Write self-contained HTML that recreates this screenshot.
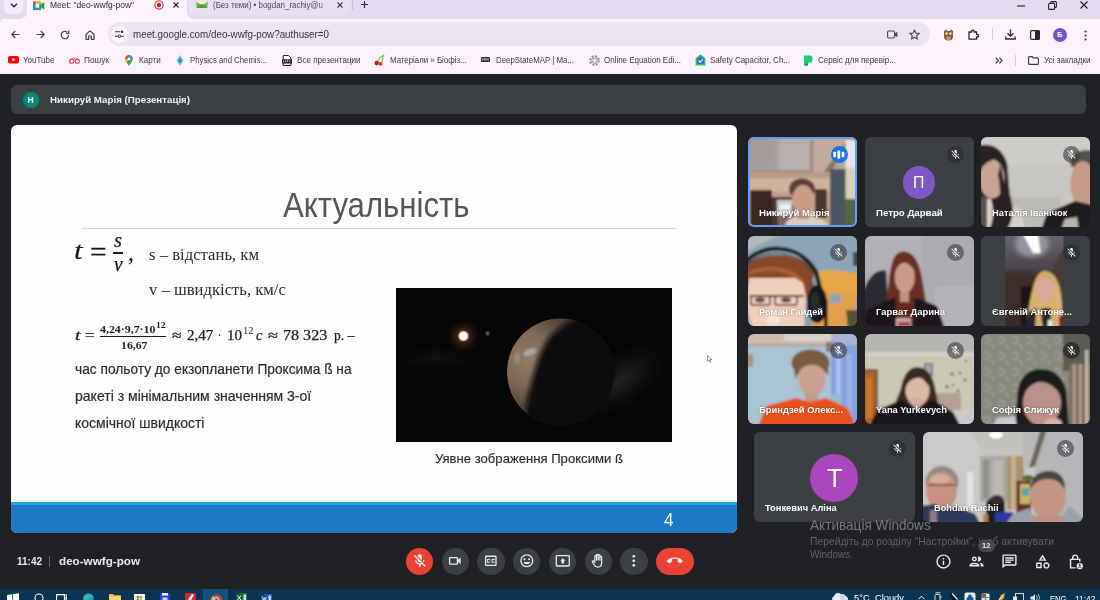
<!DOCTYPE html>
<html><head>
<meta charset="utf-8">
<style>
*{box-sizing:border-box;margin:0;padding:0}
html,body{width:1100px;height:600px;overflow:hidden;background:#202124;font-family:"Liberation Sans",sans-serif;}
.abs{position:absolute}
svg{position:absolute;overflow:visible}
#tabstrip{left:0;top:0;width:1100px;height:18.500px;background:#e5dbf1}
#tab1{left:27px;top:0;width:160px;height:19px;background:#fcf3fd;border-radius:0}
#tab2{left:189px;top:0;width:160px;height:14.5px;background:#e9e0f4;border-radius:0 0 5px 5px}
#chev{left:4px;top:-4px;width:19px;height:18.200px;background:#f3eafb;border-radius:5px}
#toolbar{left:0;top:18.500px;width:1100px;height:29.500px;background:#fcf3fd}
#bookbar{left:0;top:48px;width:1100px;height:26px;background:#fcf3fd}
#urlpill{left:108px;top:22px;width:822px;height:24px;border-radius:12px;background:#ece4f1}
.t{position:absolute;white-space:nowrap;color:#3c3b40;transform-origin:0 50%;line-height:12px;font-size:9.300px}
#meet{left:0;top:74px;width:1100px;height:515px;background:#202124}
#presbar{left:11px;top:85px;width:1075px;height:29px;border-radius:6px;background:#3c4043}
#slide{left:11px;top:125px;width:726px;height:408px;background:#fdfdfe;border-radius:6px;overflow:hidden}
#slide .s{position:absolute;white-space:nowrap;color:#262626;transform-origin:0 50%}
#hr{position:absolute;left:71px;top:103px;width:594px;height:1px;background:#d6d6d8}
.ser{font-family:"Liberation Serif",serif}
#img{position:absolute;left:385px;top:163px;width:276px;height:154px;background:#050505;overflow:hidden}
#band{position:absolute;left:0;top:377px;width:726px;height:31px;background:#1e7ac3}
#band:before{content:"";position:absolute;left:0;top:0;width:100%;height:3px;background:#2aa5de}
.tile{position:absolute;width:108.5px;height:90px;border-radius:6px;background:#3c4043;overflow:hidden}
.tile.w{width:160.6px}
.tile svg.ph{left:0;top:0;width:100%;height:100%}
.name{position:absolute;left:11px;top:70px;font-size:9.6px;line-height:12px;font-weight:bold;color:#fff;white-space:nowrap;transform-origin:0 50%;text-shadow:0 0 2px rgba(0,0,0,.55)}
.mute{position:absolute;left:82px;top:8.4px;width:17px;height:17px;border-radius:50%;background:rgba(60,62,66,.62)}
.tile.w .mute{left:134.5px}
.mute.d{background:#303236}
.mute svg{left:3px;top:3px;width:11px;height:11px}
#taskbar{left:0;top:589px;width:1100px;height:11px;background:#0b3451;overflow:hidden}
.cbtn{position:absolute;top:547.6px;width:27.4px;height:27.4px;border-radius:50%;background:#3c4043}
.cbtn svg{left:5.900px;top:5.900px;width:15.600px;height:15.600px}
.ric{position:absolute;top:553px;width:17px;height:17px}
.wm{position:absolute;white-space:nowrap;transform-origin:0 50%;color:#6f7073}
#slide .f2{font-size:14px;line-height:16px;color:#1c1c1c;-webkit-text-stroke:0.250px #1c1c1c}
</style>
</head>
<body>
<div class="abs" id="tabstrip"></div>
<div class="abs" id="chev"></div>
<svg style="left:9.5px;top:2.5px" width="8" height="5" viewBox="0 0 8 5"><path d="M1 0.8 L4 3.8 L7 0.8" fill="none" stroke="#2d2a33" stroke-width="1.4"></path></svg>
<div class="abs" id="tab1"></div>
<div class="abs" id="tab2"></div>
<div class="abs" style="left:22px;top:13px;width:5px;height:5.500px;background:radial-gradient(circle at 0 0,#e5dbf1 4.600px,#fcf3fd 5.200px)"></div>
<div class="abs" style="left:187px;top:13px;width:5px;height:5.500px;background:radial-gradient(circle at 100% 0,#e5dbf1 4.600px,#fcf3fd 5.200px)"></div>
<!-- meet icon -->
<svg style="left:33px;top:0.5px" width="12" height="9.5" viewBox="0 0 12 9.5">
<rect x="0" y="0.5" width="8.2" height="8.6" rx="1" fill="#1e88e5"></rect>
<rect x="0" y="0.5" width="2.6" height="2.4" fill="#ea4335"></rect>
<rect x="0" y="2.9" width="2.6" height="6.2" fill="#1e88e5"></rect>
<rect x="2.6" y="0.5" width="5.6" height="2.4" fill="#fbbc04"></rect>
<rect x="2.6" y="6.7" width="5.6" height="2.4" fill="#34a853"></rect>
<rect x="2.6" y="2.9" width="3.6" height="3.8" fill="#fcf3fd"></rect>
<path d="M8.2 3.3 L11.3 0.9 L11.3 8.7 L8.2 6.3Z" fill="#1b9e4b"></path>
</svg>
<div class="t" id="tt1" style="left: 50px; top: -1px; font-size: 9.8px; color: rgb(43, 42, 48); transform: scaleX(0.863);">Meet: "deo-wwfg-pow"</div>
<svg style="left:154px;top:0.2px" width="10" height="10" viewBox="0 0 10 10"><circle cx="5" cy="5" r="4.1" fill="none" stroke="#c5221f" stroke-width="1"></circle><circle cx="5" cy="5" r="2.2" fill="#c5221f"></circle></svg>
<svg style="left:173px;top:2px" width="6" height="6" viewBox="0 0 6 6"><path d="M0.5 0.5L5.5 5.5M5.5 0.5L0.5 5.5" stroke="#25232a" stroke-width="1.2"></path></svg>
<!-- tab2 -->
<svg style="left:196px;top:0px" width="12" height="9" viewBox="0 0 12 9"><rect x="0.5" y="0" width="11" height="8" rx="1" fill="#6db33f"></rect><path d="M0.5 2 L6 5.2 L11.5 2 L11.5 0 L0.5 0Z" fill="#e8f0dc"></path><path d="M0.5 8 L6 4 L11.5 8Z" fill="#4f9a2e"></path></svg>
<div class="t" id="tt2" style="left: 213px; top: -1px; font-size: 9.5px; color: rgb(74, 72, 80); transform: scaleX(0.834);">(Без теми) • bogdan_rachiy@u</div>
<div class="abs" style="left:318px;top:0;width:14px;height:12px;background:linear-gradient(90deg,rgba(233,224,244,0),#e9e0f4)"></div>
<svg style="left:337px;top:2px" width="6" height="6" viewBox="0 0 6 6"><path d="M0.5 0.5L5.5 5.5M5.5 0.5L0.5 5.5" stroke="#3a3840" stroke-width="1.1"></path></svg>
<div class="abs" style="left:352px;top:0;width:1px;height:10px;background:#cbb8ee"></div>
<svg style="left:360.5px;top:1px" width="7" height="7" viewBox="0 0 7 7"><path d="M3.5 0V7M0 3.5H7" stroke="#2d2a33" stroke-width="1.2"></path></svg>
<!-- window controls -->
<svg style="left:1017px;top:4.5px" width="8" height="2" viewBox="0 0 8 2"><path d="M0 1H8" stroke="#222" stroke-width="1.1"></path></svg>
<svg style="left:1048px;top:0.5px" width="9" height="9" viewBox="0 0 9 9"><rect x="0.6" y="2.4" width="6" height="6" rx="1" fill="none" stroke="#222" stroke-width="1.1"></rect><path d="M2.6 2.2V1.6A1 1 0 0 1 3.6 0.6H7.4A1 1 0 0 1 8.4 1.6V5.4A1 1 0 0 1 7.4 6.4H6.8" fill="none" stroke="#222" stroke-width="1.1"></path></svg>
<svg style="left:1080px;top:1px" width="8" height="8" viewBox="0 0 8 8"><path d="M0.5 0.5L7.5 7.5M7.5 0.5L0.5 7.5" stroke="#222" stroke-width="1.2"></path></svg>

<div class="abs" id="toolbar"></div>
<div class="abs" id="bookbar"></div>
<div class="abs" style="left:0;top:18px;width:5px;height:5px;background:radial-gradient(circle at 100% 100%,#fcf3fd 4.600px,#e5dbf1 5.200px)"></div>
<div class="abs" id="urlpill"></div>
<!-- nav icons -->
<svg style="left:11px;top:30px" width="9" height="9" viewBox="0 0 9 9"><path d="M8.5 4.5H1M4.3 1L0.8 4.5L4.3 8" fill="none" stroke="#47464c" stroke-width="1.2"></path></svg>
<svg style="left:35.5px;top:30px" width="9" height="9" viewBox="0 0 9 9"><path d="M0.5 4.5H8M4.7 1L8.2 4.5L4.7 8" fill="none" stroke="#47464c" stroke-width="1.2"></path></svg>
<svg style="left:60px;top:29.5px" width="10" height="10" viewBox="0 0 10 10"><path d="M8.6 5A3.7 3.7 0 1 1 7.4 2.3" fill="none" stroke="#47464c" stroke-width="1.2"></path><path d="M8.8 0.6V3.4H6" fill="none" stroke="#47464c" stroke-width="1.2"></path></svg>
<svg style="left:85px;top:29.5px" width="10" height="10" viewBox="0 0 10 10"><path d="M1 4.3L5 0.9L9 4.3V9.3H6.3V6H3.7V9.3H1Z" fill="none" stroke="#47464c" stroke-width="1.2" stroke-linejoin="round"></path></svg>
<div class="abs" style="left:110.5px;top:25.5px;width:17px;height:17px;border-radius:50%;background:#fbf7fd"></div>
<svg style="left:114.5px;top:30px" width="9" height="8" viewBox="0 0 9 8"><path d="M0 1.8H5M0 6.2H3.6M6.2 6.2H9" stroke="#2c2b31" stroke-width="1.1"></path><circle cx="7" cy="1.8" r="1.3" fill="#2c2b31"></circle><circle cx="4.6" cy="6.2" r="1.3" fill="none" stroke="#2c2b31" stroke-width="1"></circle></svg>
<div class="t" id="url" style="left: 133px; top: 28.5px; font-size: 10.4px; color: rgb(54, 53, 58); transform: scaleX(0.944);">meet.google.com/deo-wwfg-pow?authuser=0</div>
<!-- right toolbar icons -->
<svg style="left:887px;top:30px" width="11" height="9" viewBox="0 0 11 9"><rect x="0.6" y="1" width="7" height="7" rx="1.2" fill="none" stroke="#47464c" stroke-width="1.1"></rect><path d="M7.8 3.6L10.4 1.8V7.2L7.8 5.4Z" fill="#47464c"></path></svg>
<svg style="left:909px;top:29px" width="11" height="11" viewBox="0 0 11 11"><path d="M5.5 0.9L6.9 4.1L10.3 4.4L7.7 6.6L8.5 10L5.5 8.2L2.5 10L3.3 6.6L0.7 4.4L4.1 4.1Z" fill="none" stroke="#47464c" stroke-width="1.1" stroke-linejoin="round"></path></svg>
<svg style="left:943px;top:29px" width="11" height="12" viewBox="0 0 11 12"><path d="M1 2L2.8 0.6L4 2H7L8.2 0.6L10 2V8C10 10.5 8 11.5 5.5 11.5S1 10.5 1 8Z" fill="#8a5a3a"></path><circle cx="3.6" cy="4.6" r="1.3" fill="#f3d9a0"></circle><circle cx="7.4" cy="4.6" r="1.3" fill="#f3d9a0"></circle><path d="M3.5 7.5H7.5V11H3.5Z" fill="#c49a6c"></path></svg>
<svg style="left:968px;top:29px" width="11" height="11" viewBox="0 0 11 11"><path d="M1 3H3.6V2.4A1.3 1.3 0 0 1 6.2 2.4V3H8.6V5.4H9.2A1.3 1.3 0 0 1 9.2 8H8.6V10.2H1Z" fill="none" stroke="#26252b" stroke-width="1.3" stroke-linejoin="round"></path></svg>
<div class="abs" style="left:992px;top:28px;width:1px;height:12px;background:#d6cce6"></div>
<svg style="left:1005px;top:29px" width="11" height="11" viewBox="0 0 11 11"><path d="M5.5 0.5V7M2.5 4.2L5.5 7.2L8.5 4.2" fill="none" stroke="#2d2c32" stroke-width="1.3"></path><path d="M0.8 7.5V10H10.2V7.5" fill="none" stroke="#2d2c32" stroke-width="1.3"></path></svg>
<svg style="left:1030px;top:29.5px" width="10" height="10" viewBox="0 0 10 10"><rect x="0.6" y="0.6" width="8.8" height="8.8" rx="1" fill="none" stroke="#2d2c32" stroke-width="1.2"></rect><rect x="5" y="0.6" width="4.4" height="8.8" fill="#2d2c32"></rect></svg>
<div class="abs" style="left:1053px;top:27.5px;width:14px;height:14px;border-radius:50%;background:#7b4fc9"></div>
<div class="t" style="left:1057.3px;top:28.8px;font-size:7px;color:#fff;font-weight:bold">Б</div>
<svg style="left:1083.5px;top:29.5px" width="3" height="11" viewBox="0 0 3 11"><circle cx="1.5" cy="1.5" r="1.1" fill="#38373d"></circle><circle cx="1.5" cy="5.5" r="1.1" fill="#38373d"></circle><circle cx="1.5" cy="9.5" r="1.1" fill="#38373d"></circle></svg>

<!-- bookmarks -->
<svg style="left:8.3px;top:56.2px" width="11" height="8" viewBox="0 0 11 8"><rect width="11" height="7.6" rx="2" fill="#f00"></rect><path d="M4.3 2L7.4 3.8L4.3 5.6Z" fill="#fff"></path></svg>
<div class="t" style="left: 23.3px; top: 53.5px; transform: scaleX(0.862);">YouTube</div>
<svg style="left:68.7px;top:56.5px" width="11" height="7" viewBox="0 0 11 7"><circle cx="2.7" cy="4.2" r="2.1" fill="none" stroke="#e0455a" stroke-width="1.1"></circle><circle cx="8.3" cy="4.2" r="2.1" fill="none" stroke="#e0455a" stroke-width="1.1"></circle><path d="M2.7 2.1L4.5 0.6L6.5 2.1L8.3 2.1" fill="none" stroke="#e0455a" stroke-width="1"></path></svg>
<div class="t" style="left: 84.3px; top: 53.5px; transform: scaleX(0.892);">Пошук</div>
<svg style="left:124.5px;top:54.5px" width="8" height="11" viewBox="0 0 8 11"><path d="M4 0.3A3.7 3.7 0 0 0 0.3 4C0.3 6.5 4 10.7 4 10.7S7.7 6.5 7.7 4A3.7 3.7 0 0 0 4 0.3Z" fill="#34a853"></path><path d="M4 0.3A3.7 3.7 0 0 0 0.3 4L4 4Z" fill="#ea4335"></path><path d="M4 0.3A3.7 3.7 0 0 1 7.7 4L4 4Z" fill="#4285f4"></path><path d="M0.3 4C0.3 5 1 6.3 1.8 7.5L4 4Z" fill="#fbbc04"></path><circle cx="4" cy="4" r="1.4" fill="#fff"></circle></svg>
<div class="t" style="left: 138.5px; top: 53.5px; transform: scaleX(0.867);">Карти</div>
<svg style="left:175.5px;top:54.5px" width="8" height="11" viewBox="0 0 8 11"><path d="M4 0L7.6 5.5L4 11L0.4 5.5Z" fill="#7ec8e0"></path><path d="M4 2.5L6 5.5L4 8.5L2 5.5Z" fill="#2a8fb5"></path></svg>
<div class="t" style="left: 190px; top: 53.5px; transform: scaleX(0.837);">Physics and Chemis...</div>
<svg style="left:281.5px;top:54.5px" width="10" height="11" viewBox="0 0 10 11"><path d="M1.2 0.5H6.5L9 3V10.5H1.2Z" fill="#fff" stroke="#222" stroke-width="1"></path><rect x="0" y="4.2" width="10" height="4.3" rx="0.6" fill="#1d1d1d"></rect><path d="M1.5 7.4V5.2M3.6 7.4V5.2M5.2 7.4V5.2H6.4M7.8 7.4V5.2" stroke="#fff" stroke-width="0.7"></path></svg>
<div class="t" style="left: 296.7px; top: 53.5px; transform: scaleX(0.867);">Все презентации</div>
<svg style="left:374px;top:54.5px" width="11" height="11" viewBox="0 0 11 11"><path d="M3 7.5C4 4 6 2 9.5 0.5C8.5 3 8 5 8.2 7.5" fill="none" stroke="#8bb84a" stroke-width="1.2"></path><path d="M9.5 0.5C7 1 5.5 2.5 5 4.5" fill="#9acb52"></path><circle cx="2.8" cy="8" r="2.3" fill="#c4151c"></circle><circle cx="6.6" cy="8.8" r="1.9" fill="#e02a2f"></circle></svg>
<div class="t" style="left: 389.5px; top: 53.5px; transform: scaleX(0.845);">Матеріали » Біофіз...</div>
<svg style="left:481px;top:57px" width="9" height="5" viewBox="0 0 9 5"><rect width="9" height="5" rx="0.8" fill="#2b2b2b"></rect><path d="M1.2 3.8V1.3L2.4 2.8L3.6 1.3V3.8M4.8 3.8V1.3L6 2.8L7.2 1.3V3.8" fill="none" stroke="#e8e8e8" stroke-width="0.6"></path></svg>
<div class="t" style="left: 496px; top: 53.5px; transform: scaleX(0.846);">DeepStateMAP | Ma...</div>
<svg style="left:588.5px;top:54.5px" width="11" height="11" viewBox="0 0 11 11"><circle cx="5.5" cy="5.5" r="4.2" fill="none" stroke="#8d8d8d" stroke-width="2.2" stroke-dasharray="1.9 1.4"></circle><circle cx="5.5" cy="5.5" r="3.4" fill="#b9b9b9"></circle><circle cx="5.5" cy="5.5" r="1.7" fill="#f1edf3"></circle></svg>
<div class="t" style="left: 604px; top: 53.5px; transform: scaleX(0.856);">Online Equation Edi...</div>
<svg style="left:694.5px;top:54px" width="11" height="12" viewBox="0 0 11 12"><path d="M5.5 0.3L10.4 4.3V11.5H0.6V4.3Z" fill="#3bbf4a"></path><path d="M5.5 2.2L8.8 5V10H2.2V5Z" fill="#2a6fe0"></path><path d="M3.6 6.6L5 8.4L7.6 5.4" fill="none" stroke="#fff" stroke-width="1.1"></path></svg>
<div class="t" style="left: 710px; top: 53.5px; transform: scaleX(0.86);">Safety Capacitor, Ch...</div>
<svg style="left:803px;top:54.5px" width="10" height="11" viewBox="0 0 10 11"><path d="M1 0.5H7A2.5 2.5 0 0 1 9.5 3V5A2.5 2.5 0 0 1 7 7.5H5V10.5H1Z" fill="#0fd17a"></path><path d="M5 7.5V10.5H1Z" fill="#08a35c"></path></svg>
<div class="t" style="left: 818px; top: 53.5px; transform: scaleX(0.864);">Сервіс для перевір...</div>
<svg style="left:995px;top:56.5px" width="8" height="7" viewBox="0 0 8 7"><path d="M0.7 0.7L3.4 3.5L0.7 6.3M4.4 0.7L7.1 3.5L4.4 6.3" fill="none" stroke="#3b3a40" stroke-width="1.1"></path></svg>
<div class="abs" style="left:1015px;top:54.5px;width:1px;height:11px;background:#d3c9e2"></div>
<svg style="left:1027.5px;top:55.5px" width="11" height="9" viewBox="0 0 11 9"><path d="M0.6 1.6A1 1 0 0 1 1.6 0.6H4.2L5.4 1.9H9.4A1 1 0 0 1 10.4 2.9V7.4A1 1 0 0 1 9.4 8.4H1.6A1 1 0 0 1 0.6 7.4Z" fill="none" stroke="#36353b" stroke-width="1.1"></path></svg>
<div class="t" style="left: 1044px; top: 53.5px; transform: scaleX(0.87);">Усі закладки</div>

<div class="abs" id="meet"></div>
<div class="abs" id="presbar"></div>
<div class="abs" style="left:22.7px;top:91.7px;width:16.6px;height:16.6px;border-radius:50%;background:#00897b"></div>
<div class="t" style="left:27.6px;top:94.2px;font-size:8.3px;color:#fff;font-weight:bold">Н</div>
<div class="t" id="pres" style="left: 50px; top: 93.6px; font-size: 9.7px; color: rgb(241, 243, 244); font-weight: bold; transform: scaleX(1.006);">Никируй Марія (Презентація)</div>
<div class="abs" id="slide">
<div class="s" id="title" style="left: 272px; top: 59.5px; font-size: 34.5px; line-height: 40px; color: rgb(86, 86, 86); transform: scaleX(0.903);">Актуальність</div>
<div id="hr"></div>
<!-- formula 1 -->
<div class="s ser" style="left: 63.3px; top: 110.5px; font-size: 26px; line-height: 30px; font-style: italic; color: rgb(22, 22, 22); -webkit-text-stroke: 0.15px rgb(22, 22, 22); transform: scaleX(1.189);">t</div>
<div class="s ser" style="left: 79px; top: 112px; font-size: 27px; line-height: 30px; color: rgb(22, 22, 22); -webkit-text-stroke: 0.3px rgb(22, 22, 22); transform: scaleX(1.083);">=</div>
<div class="s ser" style="left: 103px; top: 103.5px; font-size: 20.5px; line-height: 22px; font-style: italic; color: rgb(22, 22, 22); -webkit-text-stroke: 0.25px rgb(22, 22, 22); transform: scaleX(1.002);">s</div>
<div style="position:absolute;left:102px;top:127.4px;width:10.2px;height:1.5px;background:#1c1c1c"></div>
<div class="s ser" style="left: 102.6px; top: 128px; font-size: 20.5px; line-height: 22px; font-style: italic; color: rgb(22, 22, 22); -webkit-text-stroke: 0.25px rgb(22, 22, 22); transform: scaleX(0.944);">v</div>
<div class="s ser" style="left: 116.5px; top: 112.5px; font-size: 26px; line-height: 30px; color: rgb(22, 22, 22); transform: scaleX(0.923);">,</div>
<div class="s ser" id="l1" style="left: 137.7px; top: 119.5px; font-size: 16.8px; line-height: 20px; color: rgb(42, 42, 42); transform: scaleX(0.994);">s – відстань, км</div>
<div class="s ser" id="l2" style="left: 137.7px; top: 155px; font-size: 16.8px; line-height: 20px; color: rgb(42, 42, 42); transform: scaleX(0.991);">v – швидкість, км/с</div>
<!-- formula 2 -->
<div class="s ser f2" style="left: 63.5px; top: 203px; font-style: italic; transform: scaleX(1.439);">t</div>
<div class="s ser f2" style="left: 73.7px; top: 203px; transform: scaleX(1.214);">=</div>
<div class="s ser" style="left: 89px; top: 198.8px; font-size: 9.6px; line-height: 12px; font-weight: bold; color: rgb(28, 28, 28); transform: scaleX(1.239);">4,24·9,7·10</div>
<div class="s ser" style="left: 144.6px; top: 195.6px; font-size: 7.4px; line-height: 10px; font-weight: bold; color: rgb(28, 28, 28); transform: scaleX(1.299);">12</div>
<div style="position:absolute;left:88.5px;top:211.3px;width:66px;height:1.1px;background:#1c1c1c"></div>
<div class="s ser" style="left: 109.5px; top: 213.6px; font-size: 10.8px; line-height: 12px; font-weight: bold; color: rgb(28, 28, 28); transform: scaleX(1.091);">16,67</div>
<div class="s ser f2" style="left: 161px; top: 203px; transform: scaleX(1.249);">≈</div>
<div class="s ser f2" style="left: 176px; top: 203px; transform: scaleX(1.073);">2,47</div>
<div class="s ser f2" style="left: 207.4px; top: 203px; transform: scaleX(0.685);">·</div>
<div class="s ser f2" style="left: 215.7px; top: 203px; transform: scaleX(1.079);">10</div>
<div class="s ser" style="left: 231.8px; top: 199.6px; font-size: 9.6px; line-height: 12px; color: rgb(28, 28, 28); transform: scaleX(1.105);">12</div>
<div class="s ser f2" style="left: 244.5px; top: 203px; font-style: italic; transform: scaleX(1.045);">c</div>
<div class="s ser f2" style="left: 257px; top: 203px; transform: scaleX(1.301);">≈</div>
<div class="s ser f2" style="left: 272.4px; top: 203px; transform: scaleX(1.148);">78 323</div>
<div class="s ser f2" style="left: 322.5px; top: 203px; transform: scaleX(0.962);">р.</div>
<div class="s ser f2" style="left: 336.4px; top: 203px; transform: scaleX(1);">–</div>
<!-- paragraph -->
<div class="s" id="p1" style="-webkit-text-stroke: 0.2px rgb(43, 43, 43); left: 63.5px; top: 235px; font-size: 15px; line-height: 18px; color: rgb(43, 43, 43); transform: scaleX(0.915);">час польоту до екзопланети Проксима ß на</div>
<div class="s" id="p2" style="-webkit-text-stroke: 0.2px rgb(43, 43, 43); left: 63.5px; top: 262px; font-size: 15px; line-height: 18px; color: rgb(43, 43, 43); transform: scaleX(0.935);">ракеті з мінімальним значенням 3-ої</div>
<div class="s" id="p3" style="-webkit-text-stroke: 0.2px rgb(43, 43, 43); left: 63.5px; top: 289px; font-size: 15px; line-height: 18px; color: rgb(43, 43, 43); transform: scaleX(0.932);">космічної швидкості</div>
<div id="img">
<svg class="ph" style="left:0;top:0" width="276" height="154" viewBox="0 0 276 154">
<defs>
<radialGradient id="star"><stop offset="0" stop-color="#fff"></stop><stop offset="0.22" stop-color="#fbe9d0"></stop><stop offset="0.360" stop-color="#6a3820" stop-opacity=".550"></stop><stop offset="1" stop-color="#2a140a" stop-opacity="0"></stop></radialGradient>
<radialGradient id="mw" cx="0.5" cy="0.5" r="0.5"><stop offset="0" stop-color="#26262a" stop-opacity=".9"></stop><stop offset="1" stop-color="#101012" stop-opacity="0"></stop></radialGradient>
<radialGradient id="pl" cx="0.200" cy="0.380" r="0.800"><stop offset="0" stop-color="#937c66"></stop><stop offset="0.300" stop-color="#7e6956"></stop><stop offset="0.550" stop-color="#584638"></stop><stop offset="1" stop-color="#241c17"></stop></radialGradient>
<filter id="b1"><feGaussianBlur stdDeviation="1.2"></feGaussianBlur></filter>
<filter id="b4"><feGaussianBlur stdDeviation="5"></feGaussianBlur></filter>
<filter id="b3" x="-20%" y="-20%" width="140%" height="140%"><feGaussianBlur stdDeviation="2.600"></feGaussianBlur></filter>
<clipPath id="plc"><circle cx="164.5" cy="84" r="53.7"></circle></clipPath>
</defs>
<rect width="276" height="154" fill="#070606"></rect>
<ellipse cx="225" cy="92" rx="60" ry="30" fill="url(#mw)" transform="rotate(-35 225 92)"></ellipse>
<ellipse cx="40" cy="70" rx="45" ry="14" fill="url(#mw)" opacity=".5"></ellipse>
<circle cx="67.4" cy="48" r="17" fill="url(#star)"></circle>
<circle cx="67.4" cy="48" r="3.6" fill="#fff" filter="url(#b1)"></circle>
<circle cx="91.6" cy="45.3" r="1.6" fill="#9a9a9a" filter="url(#b1)"></circle>
<circle cx="164.5" cy="84" r="53.7" fill="#0b0a0a"></circle>
<g clip-path="url(#plc)">
<circle cx="164.5" cy="84" r="53.7" fill="url(#pl)"></circle>
<path d="M186 26C168 36 156 44 150 54C142 68 137 88 132 108C130 120 129 130 129 142L235 142L235 15Z" fill="#090808" filter="url(#b3)"></path>
<ellipse cx="134" cy="64" rx="7" ry="3.500" fill="#b9c8d4" opacity=".600" filter="url(#b1)" transform="rotate(-20 134 64)"></ellipse>
<ellipse cx="121" cy="70" rx="3" ry="6" fill="#c0b0a0" opacity=".350" filter="url(#b1)"></ellipse>
</g>
</svg>
</div>
<div class="s" id="cap" style="-webkit-text-stroke: 0.15px rgb(43, 43, 43); left: 424px; top: 325.5px; font-size: 13.2px; line-height: 16px; color: rgb(43, 43, 43); transform: scaleX(0.994);">Уявне зображення Проксими ß</div>
<div id="band"><div class="s" style="left: 653px; top: 8px; font-size: 18.5px; line-height: 20px; color: rgb(255, 255, 255); transform: scaleX(0.923);">4</div></div>
</div>
<!-- mouse cursor -->
<svg style="left:707px;top:354.5px" width="6" height="8" viewBox="0 0 6 8"><path d="M0.5 0.5V6.2L2 4.9L3 7.2L3.9 6.8L2.9 4.6H4.8Z" fill="#fff" stroke="#555" stroke-width="0.6"></path></svg>
<svg width="0" height="0" style="left:0;top:0"><defs>
<filter id="sb" x="-5%" y="-5%" width="110%" height="110%"><feGaussianBlur stdDeviation="0.9"></feGaussianBlur></filter>
<filter id="sb2" x="-20%" y="-20%" width="140%" height="140%"><feGaussianBlur stdDeviation="2.2"></feGaussianBlur></filter>
</defs></svg>

<!-- T1 Никируй Марія -->
<div class="tile" style="left:748.2px;top:137.4px">
<svg class="ph" viewBox="0 0 108.5 90" preserveAspectRatio="none"><g filter="url(#sb)">
<rect x="-3" y="-3" width="115" height="96" fill="#c8a893"></rect>
<path d="M-3 -3H112V20L80 38H-3Z" fill="#b3a6a1"></path>
<path d="M3 3H62V34H3Z" fill="#b9b1ae"></path>
<path d="M-3 -3H30V34H-3Z" fill="#9d9592" opacity=".7" filter="url(#sb2)"></path>
<path d="M62 3H65V35H3V33H62Z" fill="#9b8b86"></path>
<path d="M66 3H100L78 36H66Z" fill="#c2aa9c"></path>
<path d="M100 2L104 4L80 38L75 36Z" fill="#8c7465"></path>
<rect x="-3" y="35" width="86" height="6" fill="#b99b89"></rect>
<rect x="-3" y="41" width="86" height="14" fill="#cfb29c"></rect>
<rect x="-3" y="55" width="86" height="38" fill="#c29f8a"></rect>
<rect x="2" y="53" width="22" height="38" fill="#3a2521"></rect>
<rect x="24" y="60" width="22" height="31" fill="#4d342c"></rect>
<rect x="29" y="63" width="15" height="15" fill="#c5cdd6"></rect>
<rect x="31.5" y="67.5" width="11" height="5" fill="#f2f2f2"></rect>
<rect x="30" y="78" width="14" height="12" fill="#7d6a5c"></rect>
<rect x="67" y="52" width="12" height="29" fill="#4b3631"></rect>
<rect x="82" y="32" width="16" height="60" fill="#4b5560"></rect>
<rect x="97.5" y="3" width="12" height="28" fill="#e6e6e6"></rect>
<rect x="97.5" y="31" width="12" height="36" fill="#d8cfb8"></rect>
<rect x="97" y="62" width="12" height="30" fill="#56644b"></rect>
<ellipse cx="54" cy="52" rx="13" ry="10.5" fill="#5a4137"></ellipse>
<ellipse cx="55" cy="63" rx="11" ry="15" fill="#c99c88"></ellipse>
<path d="M36 92C38 80 46 79 55 80C66 79 78 80 82 92Z" fill="#dacfbb"></path>
<rect x="49" y="74" width="12" height="8" fill="#bd917e"></rect>
</g></svg>
<div class="abs" style="left:0;top:0;width:100%;height:100%;border:2.700px solid #669df6;border-radius:6px"></div>
<div class="abs" style="left:82.4px;top:8.2px;width:17.4px;height:17.4px;border-radius:50%;background:#1a73e8"></div>
<svg style="left:85.300px;top:12.400px" width="11.600" height="9" viewBox="0 0 11.6 9"><rect x="0.300" y="1.700" width="2.700" height="5.600" rx="0.800" fill="#fff"></rect><rect x="4.450" y="0.200" width="2.700" height="8.600" rx="0.800" fill="#fff"></rect><rect x="8.600" y="1.700" width="2.700" height="5.600" rx="0.800" fill="#fff"></rect></svg>
<div class="name" style="transform: scaleX(0.997);">Никируй Марія</div>
</div>

<!-- T2 Петро Дарвай -->
<div class="tile" style="left:865px;top:137.4px">
<div class="abs" style="left:37.5px;top:28.6px;width:32.6px;height:32.6px;border-radius:50%;background:#7e57c2"></div>
<div class="t" style="left: 48px; top: 35.5px; font-size: 17px; line-height: 19px; color: rgb(255, 255, 255); transform: scaleX(0.933);">П</div>
<div class="mute d"><svg viewBox="0 0 24 24"><path fill="#fff" d="M19 11h-1.700c0 .740-.160 1.430-.430 2.050l1.230 1.230c.560-.980.900-2.090.900-3.280zm-4.020.170c0-.060.020-.110.020-.170V5c0-1.660-1.340-3-3-3S9 3.340 9 5v.180l5.980 5.990zM4.270 3L3 4.270l6.010 6.010V11c0 1.650 1.330 3 2.990 3 .220 0 .440-.030.650-.080l1.660 1.660c-.710.330-1.500.520-2.310.520-2.760 0-5.300-2.100-5.300-5.100H5c0 3.410 2.720 6.230 6 6.720V21h2v-3.280c.910-.130 1.770-.450 2.540-.900L19.730 21 21 19.730 4.270 3z"></path></svg></div>
<div class="name" style="text-shadow: none; transform: scaleX(1.007);">Петро Дарвай</div>
</div>

<!-- T3 Наталія Іванічок -->
<div class="tile" style="left:981.2px;top:137.4px">
<svg class="ph" viewBox="0 0 108.5 90" preserveAspectRatio="none"><g filter="url(#sb)">
<rect x="-3" y="-3" width="115" height="96" fill="#c7c6c2"></rect>
<rect x="-3" y="-3" width="115" height="30" fill="#cdccc8"></rect>
<rect x="30" y="60" width="50" height="33" fill="#bdbbb6"></rect>
<path d="M-3 65L10 62L40 72L44 93H-3Z" fill="#d6d2ca"></path>
<path d="M-3 10C8 6 22 12 26 26C28 40 27 52 31 66C33 76 30 86 26 93H8C14 80 12 70 10 62L-3 60Z" fill="#2b2321"></path>
<ellipse cx="11" cy="42" rx="12.5" ry="19.5" fill="#c9a495"></ellipse>
<path d="M-3 9C8 5 20 10 24 22C14 20 4 24 -3 36Z" fill="#2b2321"></path>
<path d="M19 28C24 40 22 56 28 70L22 80C18 66 20 50 17 38Z" fill="#2b2321"></path>
<rect x="-3" y="60" width="9" height="33" fill="#5a5048"></rect>
<path d="M89 22C94 13 104 12 112 14V30H90Z" fill="#56504c"></path>
<ellipse cx="102" cy="47" rx="12.5" ry="23" fill="#c59b8b"></ellipse>
<path d="M60 93L66 76L94 64L112 68V93Z" fill="#1f1d1d"></path>
<path d="M80 93L84 82L96 80L98 93Z" fill="#b9b5a8"></path>
</g></svg>
<div class="mute"><svg viewBox="0 0 24 24"><path fill="#fff" d="M19 11h-1.700c0 .740-.160 1.430-.430 2.050l1.230 1.230c.560-.980.900-2.090.900-3.280zm-4.020.170c0-.060.020-.110.020-.170V5c0-1.660-1.340-3-3-3S9 3.340 9 5v.180l5.980 5.990zM4.270 3L3 4.270l6.010 6.010V11c0 1.650 1.330 3 2.990 3 .220 0 .440-.030.650-.080l1.660 1.660c-.710.330-1.500.520-2.310.520-2.760 0-5.300-2.100-5.300-5.100H5c0 3.410 2.720 6.230 6 6.720V21h2v-3.280c.910-.130 1.770-.450 2.540-.900L19.730 21 21 19.730 4.270 3z"></path></svg></div>
<div class="name" style="transform: scaleX(0.97);">Наталія Іванічок</div>
</div>

<!-- T4 Роман Гайдей -->
<div class="tile" style="left:748.2px;top:235.7px">
<svg class="ph" viewBox="0 0 108.5 90" preserveAspectRatio="none"><g filter="url(#sb)">
<rect x="-3" y="-3" width="115" height="96" fill="#8ba4b8"></rect>
<path d="M-3 -3H36L-3 16Z" fill="#b2b9b8"></path>
<rect x="105" y="16" width="6" height="14" fill="#4a4a4a"></rect>
<path d="M70 36C80 32 100 36 112 38V58H72Z" fill="#e9a646"></path>
<path d="M78 56H108V93H62L70 72Z" fill="#e3a04c"></path>
<rect x="82" y="58" width="11" height="9" fill="#8ba4b8"></rect>
<path d="M98 74H112V93H100Z" fill="#5a5038"></path>
<ellipse cx="30" cy="38" rx="36" ry="19" fill="#8c4b29"></ellipse>
<path d="M-3 30C20 14 60 20 66 50L64 66L52 60L50 44L-3 44Z" fill="#87472a"></path>
<path d="M1 42H54L58 60L56 93H4L-1 70Z" fill="#f0ceBc"></path>
<path d="M0 40C16 32 40 34 56 48L54 42C40 28 14 28 0 36Z" fill="#a55f36"></path>
<rect x="2" y="59" width="54" height="2" fill="#3a2a2a"></rect>
<rect x="3" y="60" width="19" height="9" rx="2" fill="none" stroke="#3a2a2a" stroke-width="1.4"></rect>
<rect x="27" y="60" width="22" height="9" rx="2" fill="none" stroke="#3a2a2a" stroke-width="1.4"></rect>
<ellipse cx="12" cy="64" rx="5" ry="2.4" fill="#5a4a40"></ellipse>
<ellipse cx="38" cy="64" rx="5" ry="2.4" fill="#5a4a40"></ellipse>
<path d="M-3 27C10 9 50 4 68 36L72 52" fill="none" stroke="#15171a" stroke-width="4.2" stroke-linecap="round"></path>
<path d="M-3 31C10 14 48 9 64 38" fill="none" stroke="#3a3f44" stroke-width="1.2"></path>
<ellipse cx="69" cy="68" rx="10" ry="19" fill="#141416"></ellipse>
<ellipse cx="67" cy="68" rx="5" ry="13" fill="#2a2a2e"></ellipse>
<rect x="76" y="64" width="3.500" height="28" fill="#18181a"></rect>
<ellipse cx="25" cy="84" rx="7" ry="5" fill="#f7e2d6"></ellipse>
</g></svg>
<div class="mute"><svg viewBox="0 0 24 24"><path fill="#fff" d="M19 11h-1.700c0 .740-.160 1.430-.430 2.050l1.230 1.230c.560-.980.900-2.090.900-3.280zm-4.020.170c0-.060.020-.110.020-.170V5c0-1.660-1.340-3-3-3S9 3.340 9 5v.180l5.980 5.990zM4.270 3L3 4.270l6.010 6.010V11c0 1.650 1.330 3 2.990 3 .220 0 .440-.030.650-.080l1.660 1.660c-.710.330-1.500.520-2.310.520-2.760 0-5.300-2.100-5.300-5.100H5c0 3.410 2.720 6.230 6 6.720V21h2v-3.280c.910-.130 1.770-.450 2.540-.900L19.730 21 21 19.730 4.270 3z"></path></svg></div>
<div class="name" style="transform: scaleX(0.962);">Роман Гайдей</div>
</div>

<!-- T5 Гарват Дарина -->
<div class="tile" style="left:865px;top:235.7px">
<svg class="ph" viewBox="0 0 108.5 90" preserveAspectRatio="none"><g filter="url(#sb)">
<rect x="-3" y="-3" width="115" height="96" fill="#adabb0"></rect>
<rect x="-3" y="-3" width="60" height="40" fill="#b3b1b6"></rect>
<rect x="70" y="50" width="42" height="43" fill="#b6b4b9"></rect>
<path d="M-3 58C3 42 10 33 21 34.500L25 93H-3Z" fill="#2b2b32"></path>
<path d="M38 15.500C49 15.500 55 27 57.500 45C60 62 64 78 64.500 93H18C20 76 22.500 56 24.500 41C26.500 26 29 16 38 15.500Z" fill="#6b2d21"></path>
<ellipse cx="39.7" cy="41" rx="10" ry="16" fill="#ca9b8d"></ellipse>
<path d="M29 30C32 22 38 18 44 20C50 24 52 32 52 40C48 30 42 26 38 27C34 28 31 32 29 40Z" fill="#6b2d21"></path>
<path d="M-3 93L2 74L28 62L52 62L72 70L80 93Z" fill="#1b191d"></path>
<path d="M30 56L36 62H46L50 56L48 93H32Z" fill="#6b2d21" opacity=".9"></path>
<rect x="35" y="56" width="9" height="10" fill="#c0917f"></rect>
<rect x="31" y="82" width="15" height="11" fill="#c8a8a4"></rect>
<rect x="33" y="86" width="12" height="4" fill="#b03030"></rect>
</g></svg>
<div class="mute"><svg viewBox="0 0 24 24"><path fill="#fff" d="M19 11h-1.700c0 .740-.160 1.430-.430 2.050l1.230 1.230c.560-.980.900-2.090.900-3.280zm-4.020.170c0-.060.020-.110.020-.170V5c0-1.660-1.340-3-3-3S9 3.340 9 5v.180l5.980 5.990zM4.270 3L3 4.270l6.010 6.010V11c0 1.650 1.330 3 2.990 3 .220 0 .440-.030.650-.080l1.660 1.660c-.710.330-1.500.520-2.310.520-2.760 0-5.300-2.100-5.300-5.100H5c0 3.410 2.720 6.230 6 6.720V21h2v-3.280c.910-.130 1.770-.450 2.540-.900L19.730 21 21 19.730 4.270 3z"></path></svg></div>
<div class="name" style="transform: scaleX(0.985);">Гарват Дарина</div>
</div>

<!-- T6 Євгеній Антоне... -->
<div class="tile" style="left:981.2px;top:235.7px">
<svg class="ph" viewBox="0 0 108.5 90" preserveAspectRatio="none">
<defs><linearGradient id="t6g" x1="0" y1="0" x2="0" y2="1"><stop offset="0" stop-color="#6a6670"></stop><stop offset="0.38" stop-color="#4a4448"></stop><stop offset="0.42" stop-color="#3c302c"></stop><stop offset="1" stop-color="#382a26"></stop></linearGradient>
<clipPath id="t6c"><rect x="24.2" y="0" width="58.3" height="90"></rect></clipPath></defs>
<g clip-path="url(#t6c)"><g filter="url(#sb)">
<rect x="20" y="-3" width="66" height="96" fill="url(#t6g)"></rect>
<ellipse cx="51" cy="8" rx="17" ry="13" fill="#9694a0" filter="url(#sb2)"></ellipse>
<path d="M42 -2H57L59.500 17H52Z" fill="#fff"></path>
<path d="M72 30L84 10V60H72Z" fill="#4a3a36"></path>
<rect x="40" y="50" width="10" height="43" fill="#1e1414"></rect>
<path d="M64 35C72 35 78 44 80 58C82 72 82 84 80 93H46C46 80 48 66 52 52C54 42 58 35 64 35Z" fill="#d8b070"></path>
<ellipse cx="64" cy="53" rx="9" ry="13.500" fill="#d9a999"></ellipse>
<path d="M54 48C56 40 60 37 65 37C70 37 74 42 75 50C72 44 68 42 64 42C60 42 56 44 54 48Z" fill="#d0a868"></path>
<path d="M44 93L48 76L58 70L60 93Z" fill="#26262a"></path>
<path d="M58 72H70V93H58Z" fill="#2c2c30"></path>
<path d="M56 60C56 74 54 86 54 93H62C60 84 60 74 60 64Z" fill="#d8b070"></path>
<path d="M70 62C72 74 72 86 72 93H80C80 82 78 70 75 60Z" fill="#d8b070"></path>
<rect x="67" y="84" width="4" height="9" fill="#e8e8e8"></rect>
<rect x="78" y="80" width="6" height="13" fill="#7a2028"></rect>
</g></g></svg>
<div class="mute d"><svg viewBox="0 0 24 24"><path fill="#fff" d="M19 11h-1.700c0 .740-.160 1.430-.430 2.050l1.230 1.230c.560-.980.900-2.090.900-3.280zm-4.020.170c0-.060.020-.110.020-.170V5c0-1.660-1.340-3-3-3S9 3.340 9 5v.180l5.980 5.990zM4.270 3L3 4.270l6.010 6.010V11c0 1.650 1.330 3 2.990 3 .220 0 .440-.030.650-.080l1.660 1.660c-.710.330-1.500.520-2.310.520-2.760 0-5.300-2.100-5.300-5.100H5c0 3.410 2.720 6.230 6 6.720V21h2v-3.280c.910-.130 1.770-.450 2.540-.900L19.730 21 21 19.730 4.270 3z"></path></svg></div>
<div class="name" style="transform: scaleX(0.983);">Євгеній Антоне...</div>
</div>

<!-- T7 Бриндзей Олекс... -->
<div class="tile" style="left:748.2px;top:333.8px">
<svg class="ph" viewBox="0 0 108.5 90" preserveAspectRatio="none"><g filter="url(#sb)">
<rect x="-3" y="-3" width="115" height="96" fill="#a9c3d3"></rect>
<rect x="-3" y="-3" width="90" height="14" fill="#cbbcae"></rect>
<rect x="36" y="-3" width="50" height="10" fill="#d9cfc4"></rect>
<rect x="-3" y="10" width="88" height="2.500" fill="#b9a292"></rect>
<rect x="83" y="-3" width="29" height="96" fill="#86a2dc"></rect>
<rect x="88" y="-3" width="5" height="96" fill="#a8bfee"></rect>
<rect x="99" y="20" width="5" height="73" fill="#9ab4ea"></rect>
<rect x="83" y="-3" width="29" height="14" fill="#a8b4d4"></rect>
<rect x="78" y="8" width="8" height="10" fill="#8a7a78"></rect>
<rect x="-3" y="20" width="8" height="13" fill="#a99282"></rect>
<rect x="84" y="60" width="8" height="33" fill="#a0b8d0"></rect>
<ellipse cx="62.500" cy="29" rx="19" ry="13.500" fill="#7b5b41"></ellipse>
<ellipse cx="64" cy="44.500" rx="13.500" ry="18" fill="#c9a191"></ellipse>
<path d="M46 36C48 24 58 19 68 20C78 22 82 30 80 42C76 34 70 30 62 31C54 32 50 36 48 46Z" fill="#7b5b41"></path>
<rect x="57" y="58" width="13" height="12" fill="#c49a88"></rect>
<path d="M10 93L18 72L48 64L62 68L78 64L100 74L108 93Z" fill="#e8511d"></path>
</g></svg>
<div class="mute"><svg viewBox="0 0 24 24"><path fill="#fff" d="M19 11h-1.700c0 .740-.160 1.430-.430 2.050l1.230 1.230c.560-.980.900-2.090.900-3.280zm-4.020.170c0-.060.020-.110.020-.170V5c0-1.660-1.340-3-3-3S9 3.340 9 5v.180l5.980 5.990zM4.270 3L3 4.270l6.010 6.010V11c0 1.650 1.330 3 2.990 3 .220 0 .440-.030.650-.080l1.660 1.660c-.710.330-1.500.520-2.310.520-2.760 0-5.300-2.100-5.300-5.100H5c0 3.410 2.720 6.230 6 6.720V21h2v-3.280c.910-.130 1.770-.450 2.540-.900L19.730 21 21 19.730 4.270 3z"></path></svg></div>
<div class="name" style="transform: scaleX(0.979);">Бриндзей Олекс...</div>
</div>

<!-- T8 Yana Yurkevych -->
<div class="tile" style="left:865px;top:333.8px">
<svg class="ph" viewBox="0 0 108.5 90" preserveAspectRatio="none"><g filter="url(#sb)">
<rect x="-3" y="-3" width="115" height="96" fill="#c9c8b5"></rect>
<rect x="-3" y="-3" width="115" height="22" fill="#b6b5b1"></rect>
<rect x="-3" y="18" width="115" height="4" fill="#d2d2ca"></rect>
<rect x="-3" y="35" width="16" height="58" fill="#7a5c3c"></rect>
<rect x="-3" y="38" width="13" height="55" fill="#b9611d"></rect>
<rect x="1" y="44" width="6" height="40" fill="#c9782c"></rect>
<rect x="59" y="29" width="9" height="13" fill="#8b7b72"></rect>
<rect x="61" y="31" width="5" height="9" fill="#a2aac2"></rect>
<circle cx="87" cy="40" r="1.600" fill="#5a5a52"></circle><circle cx="95" cy="39" r="1.200" fill="#5a5a52"></circle><circle cx="100" cy="46" r="1.400" fill="#5a5a52"></circle><circle cx="82" cy="53" r="1.400" fill="#5a5a52"></circle><circle cx="88" cy="51" r="1.100" fill="#5a5a52"></circle><circle cx="93" cy="57" r="1.300" fill="#5a5a52"></circle><circle cx="101" cy="27" r="1.100" fill="#5a5a52"></circle>
<rect x="71" y="59" width="25" height="17" rx="2" fill="#b5a091"></rect>
<path d="M84 76H112V93H90Z" fill="#c9c9c9"></path>
<path d="M52 33C62 33 68 42 70 54C72 64 74 70 72 76H30C28 70 34 62 36 54C38 42 44 33 52 33Z" fill="#3b2923"></path>
<ellipse cx="52.500" cy="56" rx="12" ry="15.500" fill="#dab9a9"></ellipse>
<path d="M40 52C42 42 48 38 53 38C58 38 64 44 65 54C60 46 56 43 52 44C46 45 42 48 40 56Z" fill="#3b2923"></path>
<path d="M4 93L12 76L36 66L52 74L68 66L88 78L96 93Z" fill="#17171d"></path>
<path d="M44 68L52 76L60 68L58 64H46Z" fill="#d3ae9e"></path>
</g></svg>
<div class="mute"><svg viewBox="0 0 24 24"><path fill="#fff" d="M19 11h-1.700c0 .740-.160 1.430-.430 2.050l1.230 1.230c.560-.980.900-2.090.900-3.280zm-4.020.170c0-.060.020-.110.020-.170V5c0-1.660-1.340-3-3-3S9 3.340 9 5v.180l5.980 5.990zM4.270 3L3 4.270l6.010 6.010V11c0 1.650 1.330 3 2.990 3 .220 0 .440-.030.650-.080l1.660 1.660c-.710.330-1.500.520-2.310.520-2.760 0-5.300-2.100-5.300-5.100H5c0 3.410 2.720 6.230 6 6.720V21h2v-3.280c.910-.130 1.770-.450 2.540-.900L19.730 21 21 19.730 4.270 3z"></path></svg></div>
<div class="name" style="transform: scaleX(0.974);">Yana Yurkevych</div>
</div>

<!-- T9 Софія Слижук -->
<div class="tile" style="left:981.2px;top:333.8px">
<svg class="ph" viewBox="0 0 108.5 90" preserveAspectRatio="none">
<defs><pattern id="wp" width="14" height="16" patternUnits="userSpaceOnUse"><rect width="14" height="16" fill="#88887d"></rect><path d="M3 4C6 1 10 3 9 7C8 10 4 10 4 7M10 12C12 10 14 12 12 15" fill="none" stroke="#a0a095" stroke-width="1.500"></path></pattern></defs>
<g filter="url(#sb)">
<rect x="-3" y="-3" width="115" height="96" fill="url(#wp)"></rect>
<rect x="82" y="-3" width="30" height="40" fill="#5b5b51"></rect>
<rect x="88" y="30" width="24" height="63" fill="#7d6d5d"></rect>
<rect x="92" y="30" width="2.500" height="63" fill="#b4a494"></rect><rect x="98" y="30" width="2.500" height="63" fill="#b4a494"></rect><rect x="104" y="16" width="3.500" height="77" fill="#c2b2a2"></rect>
<path d="M60 35C76 35 86 48 86 64L88 93H34L36 64C36 48 44 35 60 35Z" fill="#1f1b1b"></path>
<ellipse cx="61" cy="69" rx="19" ry="23" fill="#b99189"></ellipse>
<path d="M42 62C44 48 52 42 60 42C68 42 78 48 80 62C74 52 66 48 60 48C54 48 46 52 42 62Z" fill="#1f1b1b"></path>
<path d="M11 93L16 84L34 82L36 93Z" fill="#c9c9cd"></path>
<ellipse cx="72" cy="89" rx="9" ry="5" fill="#dab1a1"></ellipse>
</g></svg>
<div class="mute d"><svg viewBox="0 0 24 24"><path fill="#fff" d="M19 11h-1.700c0 .740-.160 1.430-.430 2.050l1.230 1.230c.560-.980.900-2.090.900-3.280zm-4.020.170c0-.060.020-.110.020-.170V5c0-1.660-1.340-3-3-3S9 3.340 9 5v.180l5.980 5.990zM4.270 3L3 4.270l6.010 6.010V11c0 1.650 1.330 3 2.990 3 .220 0 .440-.030.650-.080l1.660 1.660c-.710.330-1.500.520-2.310.520-2.760 0-5.300-2.100-5.300-5.100H5c0 3.410 2.720 6.230 6 6.720V21h2v-3.280c.910-.130 1.770-.450 2.540-.900L19.730 21 21 19.730 4.270 3z"></path></svg></div>
<div class="name" style="transform: scaleX(0.986);">Софія Слижук</div>
</div>

<!-- T10 Тонкевич Аліна -->
<div class="tile w" style="left:754px;top:432px">
<div class="abs" style="left:56.400px;top:21.500px;width:48px;height:48px;border-radius:50%;background:#ab47bc"></div>
<div class="t" style="left: 72.5px; top: 31.5px; font-size: 25px; line-height: 28px; color: rgb(255, 255, 255); transform: scaleX(1.014);">Т</div>
<div class="mute d"><svg viewBox="0 0 24 24"><path fill="#fff" d="M19 11h-1.700c0 .740-.160 1.430-.430 2.050l1.230 1.230c.560-.980.900-2.090.900-3.280zm-4.020.170c0-.060.020-.110.020-.170V5c0-1.660-1.340-3-3-3S9 3.340 9 5v.180l5.980 5.990zM4.270 3L3 4.270l6.010 6.010V11c0 1.650 1.330 3 2.990 3 .220 0 .440-.030.650-.080l1.660 1.660c-.710.330-1.500.520-2.310.520-2.760 0-5.300-2.100-5.300-5.100H5c0 3.410 2.720 6.230 6 6.720V21h2v-3.280c.910-.130 1.770-.450 2.540-.900L19.730 21 21 19.730 4.270 3z"></path></svg></div>
<div class="name" style="text-shadow: none; transform: scaleX(0.97);">Тонкевич Аліна</div>
</div>

<!-- T11 Bohdan Rachii -->
<div class="tile w" style="left:922.800px;top:432px">
<svg class="ph" viewBox="0 0 160.6 90" preserveAspectRatio="none"><g filter="url(#sb)">
<rect x="-3" y="-3" width="167" height="96" fill="#c8c6c3"></rect>
<rect x="-3" y="-3" width="60" height="96" fill="#cbc9c7"></rect>
<path d="M46 -3H120V17H57Z" fill="#c2c0ba"></path>
<ellipse cx="73" cy="3" rx="7" ry="3.500" fill="#fff"></ellipse>
<rect x="56" y="16" width="46" height="8" fill="#c6c4be"></rect>
<rect x="57" y="24" width="36" height="46" fill="#a9a9a1"></rect>
<rect x="60" y="28" width="6" height="38" fill="#8e8e86"></rect><rect x="70" y="28" width="10" height="38" fill="#b9b9b3"></rect>
<rect x="84" y="24" width="17" height="54" fill="#a99171"></rect>
<rect x="88" y="24" width="5" height="54" fill="#c2b08e"></rect>
<rect x="44" y="40" width="6.500" height="36" fill="#e2e2e2"></rect>
<path d="M100 -3H122L112 32L100 36Z" fill="#bab9b8"></path>
<path d="M118 -3H124L114 32L108 34Z" fill="#6b6661"></path>
<rect x="112" y="-3" width="52" height="96" fill="#b6b5b7"></rect>
<path d="M118 -3H124L112 34L106 36Z" fill="#6b6661"></path>
<rect x="93.500" y="49" width="14.500" height="32" fill="#6b2d21"></rect>
<rect x="97" y="52" width="10" height="20" fill="#c7b862"></rect>
<rect x="99" y="56" width="7" height="8" fill="#5aa0a0"></rect>
<ellipse cx="105" cy="46" rx="6" ry="3" fill="#5a6a3a"></ellipse>
<path d="M63 93V72C64 64 78 62 82 70V93Z" fill="#1f1f23"></path>
<ellipse cx="74" cy="68" rx="6.500" ry="5" fill="#3b2b29"></ellipse>
<rect x="72" y="80" width="18" height="13" fill="#2b3b9b"></rect>
<rect x="60" y="82" width="5" height="11" fill="#c07a3a"></rect>
<ellipse cx="19" cy="50" rx="16.500" ry="16" fill="#8f8b89"></ellipse>
<ellipse cx="18.500" cy="59" rx="15.500" ry="19" fill="#c89181"></ellipse>
<ellipse cx="17" cy="47" rx="10" ry="5" fill="#d8aa9a"></ellipse>
<rect x="5" y="52" width="28" height="1.600" fill="#6a4a40"></rect>
<path d="M-3 93V74L12 72L20 78L32 74L52 82L58 93Z" fill="#2b3b5b"></path>
<rect x="7" y="78" width="7" height="15" fill="#8b7b83"></rect>
<ellipse cx="125" cy="63.500" rx="18" ry="24" fill="#c49585"></ellipse>
<path d="M108 56C108 44 116 39 126 39C136 39 143 46 142 58C138 50 132 47 125 47C118 47 112 50 108 56Z" fill="#4b4541"></path>
<path d="M82 93L90 82L106 76L112 86L138 86L146 74L160 86L164 93Z" fill="#9ba1a9"></path>
<path d="M110 84H140V93H112Z" fill="#c08f7f"></path>
</g></svg>
<div class="mute"><svg viewBox="0 0 24 24"><path fill="#fff" d="M19 11h-1.700c0 .740-.160 1.430-.430 2.050l1.230 1.230c.560-.980.900-2.090.900-3.280zm-4.020.170c0-.060.020-.110.020-.170V5c0-1.660-1.340-3-3-3S9 3.340 9 5v.180l5.980 5.990zM4.270 3L3 4.270l6.010 6.010V11c0 1.650 1.330 3 2.990 3 .220 0 .440-.030.650-.080l1.660 1.660c-.710.330-1.500.520-2.310.520-2.760 0-5.300-2.100-5.300-5.100H5c0 3.410 2.720 6.230 6 6.720V21h2v-3.280c.910-.130 1.770-.450 2.540-.900L19.730 21 21 19.730 4.270 3z"></path></svg></div>
<div class="name" style="transform: scaleX(0.96);">Bohdan Rachii</div>
</div>
<!-- bottom-left -->
<div class="t" style="left: 16.5px; top: 555.8px; font-size: 10.2px; color: rgb(232, 234, 237); font-weight: bold; transform: scaleX(0.98);">11:42</div>
<div class="abs" style="left:49px;top:555.500px;width:1px;height:11px;background:#5f6368"></div>
<div class="t" style="left: 59px; top: 555.8px; font-size: 10.2px; color: rgb(232, 234, 237); font-weight: bold; transform: scaleX(1.145);">deo-wwfg-pow</div>

<!-- center buttons -->
<div class="cbtn" style="left:405.700px;background:#ea4335"><svg viewBox="0 0 24 24"><path fill="#fff" d="M19 11h-1.700c0 .740-.160 1.430-.430 2.050l1.230 1.230c.560-.980.900-2.090.900-3.280zm-4.020.170c0-.060.020-.110.020-.170V5c0-1.660-1.340-3-3-3S9 3.340 9 5v.180l5.980 5.990zM4.270 3L3 4.270l6.010 6.010V11c0 1.650 1.330 3 2.990 3 .220 0 .440-.030.650-.080l1.660 1.660c-.710.330-1.500.520-2.310.520-2.760 0-5.300-2.100-5.300-5.100H5c0 3.410 2.720 6.230 6 6.720V21h2v-3.280c.910-.130 1.770-.450 2.540-.900L19.730 21 21 19.730 4.270 3z"></path></svg></div>
<div class="cbtn" style="left:441.500px"><svg viewBox="0 0 24 24"><path fill="#e8eaed" d="M15 8v8H5V8h10m1-2H4c-.550 0-1 .450-1 1v10c0 .550.450 1 1 1h12c.550 0 1-.450 1-1v-3.500l4 4v-11l-4 4V7c0-.550-.450-1-1-1z"></path></svg></div>
<div class="cbtn" style="left:477.300px"><svg viewBox="0 0 24 24"><path fill="#e8eaed" d="M19 4H5c-1.110 0-2 .900-2 2v12c0 1.100.890 2 2 2h14c1.100 0 2-.900 2-2V6c0-1.100-.900-2-2-2zm0 14H5V6h14v12zM7 15h3c.550 0 1-.450 1-1v-1H9.500v.500h-2v-3h2v.500H11v-1c0-.550-.450-1-1-1H7c-.550 0-1 .450-1 1v4c0 .550.450 1 1 1zm7 0h3c.550 0 1-.450 1-1v-1h-1.500v.500h-2v-3h2v.500H18v-1c0-.550-.450-1-1-1h-3c-.550 0-1 .450-1 1v4c0 .550.450 1 1 1z"></path></svg></div>
<div class="cbtn" style="left:513px"><svg viewBox="0 0 24 24"><path fill="#e8eaed" d="M11.990 2C6.470 2 2 6.480 2 12s4.470 10 9.990 10C17.520 22 22 17.520 22 12S17.520 2 11.990 2zM12 20c-4.420 0-8-3.580-8-8s3.580-8 8-8 8 3.580 8 8-3.580 8-8 8zm3.500-9c.830 0 1.500-.670 1.500-1.500S16.330 8 15.500 8 14 8.670 14 9.500s.670 1.500 1.500 1.500zm-7 0c.830 0 1.500-.670 1.500-1.500S9.330 8 8.500 8 7 8.670 7 9.500 7.670 11 8.500 11zm3.500 6.500c2.330 0 4.310-1.460 5.110-3.500H6.890c.800 2.040 2.780 3.500 5.110 3.500z"></path></svg></div>
<div class="cbtn" style="left:548.900px"><svg viewBox="0 0 24 24"><path fill="#e8eaed" d="M21 3H3c-1.110 0-2 .890-2 2v14c0 1.110.890 2 2 2h18c1.110 0 2-.890 2-2V5c0-1.110-.890-2-2-2zm0 16.020H3V4.980h18v14.040zM10 12H8l4-4 4 4h-2v4h-4v-4z"></path></svg></div>
<div class="cbtn" style="left:584.500px"><svg viewBox="0 0 24 24"><path fill="none" stroke="#e8eaed" stroke-width="1.900" stroke-linejoin="round" stroke-linecap="round" d="M7.500 12V5.200a1.300 1.300 0 0 1 2.600 0V11M10.100 10.500V3.400a1.300 1.300 0 0 1 2.600 0V10.500M12.700 10.500V4.200a1.300 1.300 0 0 1 2.600 0V11M15.300 11V6.400a1.300 1.300 0 0 1 2.600 0V15c0 4-2.400 6.600-6 6.600-2.800 0-4.400-1.300-5.600-3.500L3.600 13.500c-.5-1 .8-1.900 1.700-1.100L7.500 14.500"></path></svg></div>
<div class="cbtn" style="left:620.300px"><svg viewBox="0 0 24 24"><circle cx="12" cy="5" r="2.100" fill="#e8eaed"></circle><circle cx="12" cy="12" r="2.100" fill="#e8eaed"></circle><circle cx="12" cy="19" r="2.100" fill="#e8eaed"></circle></svg></div>
<div class="cbtn" style="left:656px;width:38.400px;border-radius:13.700px;background:#ea4335"><svg style="left:11.400px" viewBox="0 0 24 24"><path fill="#fff" d="M12 9c-1.600 0-3.150.250-4.600.720v3.100c0 .390-.230.740-.560.900-.980.490-1.870 1.120-2.660 1.850-.180.180-.430.280-.700.280-.280 0-.530-.110-.710-.290L.290 13.080c-.180-.170-.290-.420-.290-.700 0-.280.110-.530.290-.710C3.340 8.780 7.460 7 12 7s8.660 1.780 11.710 4.670c.180.180.290.430.290.710 0 .280-.110.530-.290.710l-2.480 2.480c-.180.180-.430.290-.710.290-.270 0-.520-.110-.700-.280-.790-.740-1.690-1.360-2.670-1.850-.330-.160-.560-.500-.560-.900v-3.100C15.150 9.250 13.600 9 12 9z"></path></svg></div>

<!-- windows watermark -->
<div class="wm" style="left: 810.3px; top: 517px; font-size: 14.2px; line-height: 16px; color: rgb(119, 120, 123); transform: scaleX(0.958);">Активація Windows</div>
<div class="wm" style="left: 810.3px; top: 534.5px; font-size: 10.6px; line-height: 13px; color: rgb(96, 97, 100); transform: scaleX(0.975);">Перейдіть до розділу "Настройки", щоб активувати</div>
<div class="wm" style="left: 810.3px; top: 548.3px; font-size: 10.6px; line-height: 13px; color: rgb(96, 97, 100); transform: scaleX(0.936);">Windows.</div>

<!-- right icons -->
<div class="abs" style="left:977.500px;top:539.500px;width:17px;height:12.600px;border-radius:6.300px;background:#45484c"></div>
<div class="t" style="left: 982px; top: 540.3px; font-size: 7.4px; line-height: 11px; color: rgb(232, 234, 237); font-weight: bold; transform: scaleX(1.02);">12</div>
<svg class="ric" style="left:935.100px" viewBox="0 0 24 24"><path fill="#e8eaed" d="M11 7h2v2h-2zm0 4h2v6h-2zm1-9C6.480 2 2 6.480 2 12s4.480 10 10 10 10-4.480 10-10S17.520 2 12 2zm0 18c-4.410 0-8-3.590-8-8s3.590-8 8-8 8 3.590 8 8-3.590 8-8 8z"></path></svg>
<svg class="ric" style="left:968.100px" viewBox="0 0 24 24"><path fill="#e8eaed" d="M9 13.750c-2.340 0-7 1.170-7 3.500V19h14v-1.750c0-2.330-4.660-3.500-7-3.500zM4.340 17c.840-.580 2.870-1.250 4.660-1.250s3.820.670 4.660 1.250H4.340zM9 12c1.930 0 3.500-1.570 3.500-3.500S10.930 5 9 5 5.500 6.570 5.500 8.500 7.070 12 9 12zm0-5c.830 0 1.500.670 1.500 1.500S9.830 10 9 10s-1.500-.670-1.500-1.500S8.170 7 9 7zm7.040 6.810c1.160.840 1.960 1.960 1.960 3.440V19h4v-1.750c0-2.020-3.500-3.170-5.960-3.440zM15 12c1.930 0 3.500-1.570 3.500-3.500S16.930 5 15 5c-.540 0-1.040.130-1.500.350.630.890 1 1.980 1 3.150s-.370 2.260-1 3.150c.460.220.960.350 1.500.350z"></path></svg>
<svg class="ric" style="left:1000.800px" viewBox="0 0 24 24"><path fill="#e8eaed" d="M4 4h16v12H5.170L4 17.170V4m0-2c-1.100 0-1.990.900-1.990 2L2 22l4-4h14c1.100 0 2-.900 2-2V4c0-1.100-.900-2-2-2H4zm2 10h8v2H6v-2zm0-3h12v2H6V9zm0-3h12v2H6V6z"></path></svg>
<svg class="ric" style="left:1033.800px" viewBox="0 0 24 24"><path fill="#e8eaed" d="M12 2l-5.500 9h11L12 2zm0 3.840L13.930 9h-3.870L12 5.840zM17.500 13c-2.490 0-4.500 2.010-4.500 4.500s2.010 4.500 4.500 4.500 4.500-2.010 4.500-4.500-2.010-4.500-4.500-4.500zm0 7c-1.380 0-2.500-1.120-2.500-2.500s1.120-2.500 2.500-2.500 2.500 1.120 2.500 2.500-1.120 2.500-2.500 2.500zM3 21.500h8v-8H3v8zm2-6h4v4H5v-4z"></path></svg>
<svg class="ric" style="left:1066.500px" viewBox="0 0 24 24"><path fill="none" stroke="#e8eaed" stroke-width="2" d="M8 9V6.500a3.500 3.500 0 0 1 7 0V9M12 21H5V9h13v3.500"></path><circle cx="18" cy="18.500" r="4.500" fill="#e8eaed"></circle><circle cx="18" cy="17" r="1.300" fill="#202124"></circle><path d="M15.600 20.600c.6-1 4.200-1 4.800 0" fill="none" stroke="#202124" stroke-width="1.200"></path></svg>
<div class="abs" id="taskbar">
<div class="abs" style="left:203px;top:0;width:25px;height:11px;background:#12507e"></div>
<!-- windows -->
<svg style="left:7px;top:5px" width="12" height="6" viewBox="0 0 12 6"><path d="M0 0.900L5.300 0.200V6H0ZM6.100 0.100L12 -0.700V6H6.100Z" fill="#fff"></path></svg>
<svg style="left:33.500px;top:4px" width="10" height="7" viewBox="0 0 10 7"><circle cx="5" cy="5" r="4" fill="none" stroke="#fff" stroke-width="1.100"></circle></svg>
<svg style="left:56px;top:4.500px" width="12" height="7" viewBox="0 0 12 7"><path d="M0.600 7V0.600H8.400V7M10.200 0V7" fill="none" stroke="#fff" stroke-width="1.100"></path><circle cx="10.200" cy="4" r="1" fill="#fff"></circle></svg>
<svg style="left:83px;top:4px" width="11" height="7" viewBox="0 0 11 7"><circle cx="5.500" cy="5.500" r="5.300" fill="#1fa2c8"></circle><path d="M0.500 5C2 1.500 8 1 10.500 4.500C8 3.500 5 4 5 7H1Z" fill="#35c1a0"></path></svg>
<svg style="left:108.500px;top:4.500px" width="12" height="7" viewBox="0 0 12 7"><path d="M0 0H4L5 1.200H12V7H0Z" fill="#f4b93a"></path><path d="M0 2.600H12V7H0Z" fill="#fbd470"></path></svg>
<svg style="left:133.500px;top:5px" width="11" height="6" viewBox="0 0 11 6"><rect width="11" height="6" fill="#f4f4f4"></rect><rect x="2.800" y="2" width="2.400" height="2.400" fill="#f25022"></rect><rect x="5.800" y="2" width="2.400" height="2.400" fill="#7fba00"></rect><rect x="2.800" y="4.800" width="2.400" height="2" fill="#00a4ef"></rect><rect x="5.800" y="4.800" width="2.400" height="2" fill="#ffb900"></rect></svg>
<svg style="left:159.500px;top:4px" width="10" height="7" viewBox="0 0 10 7"><rect width="10" height="7" fill="#2a3fd0"></rect><rect x="2" y="0" width="6" height="2.600" fill="#e8e8f8"></rect><rect x="2.500" y="4.500" width="5" height="2.500" fill="#c8d0ff"></rect></svg>
<svg style="left:185px;top:4px" width="11" height="7" viewBox="0 0 11 7"><rect width="11" height="7" rx="1" fill="#d5262c"></rect><path d="M3 7L7 1L9 2L6 7Z" fill="#fff"></path></svg>
<svg style="left:210.500px;top:4.500px" width="11" height="7" viewBox="0 0 11 7"><circle cx="5.500" cy="5.800" r="5.300" fill="#e74133"></circle><path d="M0.600 8A5.300 5.300 0 0 1 2 2L5.500 5.800Z" fill="#f0b52a"></path><circle cx="5.500" cy="5.800" r="2.500" fill="#fff"></circle><circle cx="5.500" cy="5.800" r="1.900" fill="#3b7be0"></circle></svg>
<svg style="left:236px;top:4px" width="11" height="7" viewBox="0 0 11 7"><rect x="3" width="8" height="7" fill="#1d7044"></rect><rect x="0" y="1" width="6.500" height="6" fill="#0f5c32"></rect><path d="M1.500 2.500L5 7M5 2.500L1.500 7" stroke="#fff" stroke-width="1"></path><rect x="7.500" y="1.500" width="2.500" height="5.500" fill="#c9e8d5"></rect></svg>
<svg style="left:261px;top:4.500px" width="11" height="7" viewBox="0 0 11 7"><rect x="3" width="8" height="7" fill="#2b5cb8"></rect><rect x="0" y="1" width="6.500" height="6" fill="#1c448f"></rect><path d="M1.200 2.600L2.300 6.500L3.300 3.500L4.300 6.500L5.400 2.600" fill="none" stroke="#fff" stroke-width="0.800"></path><rect x="7.500" y="1.500" width="2.500" height="5.500" fill="#c9d8f0"></rect></svg>
<!-- right tray -->
<svg style="left:832px;top:3px" width="16" height="9" viewBox="0 0 16 9"><ellipse cx="8" cy="7" rx="8" ry="4.500" fill="#dfe8f6"></ellipse><circle cx="6" cy="4.500" r="3.600" fill="#e8eff9"></circle><circle cx="10.500" cy="5" r="3" fill="#cfdcf0"></circle></svg>
<div class="t" style="left: 854px; top: 3.4px; font-size: 9.5px; color: rgb(255, 255, 255); transform: scaleX(0.984);">5°C&nbsp; Cloudy</div>
<svg style="left:917.500px;top:6px" width="7" height="5" viewBox="0 0 7 5"><path d="M0.600 4.200L3.500 1.200L6.400 4.200" fill="none" stroke="#fff" stroke-width="1"></path></svg>
<svg style="left:934px;top:3px" width="8" height="8" viewBox="0 0 8 8"><rect x="1" y="2.500" width="5" height="6" rx="1" fill="none" stroke="#e8e8e8" stroke-width="0.900"></rect><path d="M1.500 0.800H6.500" stroke="#e8e8e8" stroke-width="0.900"></path><path d="M6.800 3.500V6.500" stroke="#e8e8e8" stroke-width="0.900"></path></svg>
<svg style="left:949px;top:2.500px" width="10" height="9" viewBox="0 0 10 9"><path d="M1 0L5.500 4.500L8 9H4L2 4Z" fill="#0a0a0a"></path><path d="M3 1.500L8.500 7.500" stroke="#e8e8e8" stroke-width="1.300"></path></svg>
<svg style="left:964px;top:2.500px" width="12" height="9" viewBox="0 0 12 9"><rect x="0.500" y="0.500" width="11" height="9" rx="2" fill="#e8eef8"></rect><path d="M2.500 9V6.500C2.500 4 9.500 4 9.500 6.500V9Z" fill="#1c5a9a"></path><circle cx="6" cy="4.500" r="2" fill="#1c5a9a"></circle></svg>
<svg style="left:981px;top:3.500px" width="9" height="8" viewBox="0 0 9 8"><path d="M0.500 1L4.500 0L8.500 1V8H0.500Z" fill="#e8e8e8"></path><path d="M4.500 0V8M0.500 4.500H8.500" stroke="#28a745" stroke-width="1.200"></path><rect x="0.500" y="1" width="4" height="3.500" fill="#d83b3b"></rect></svg>
<svg style="left:997px;top:3.500px" width="9" height="8" viewBox="0 0 9 8"><path d="M1 8L4 2L8 0L7 5L4 8Z" fill="#e8a23a"></path><path d="M2 7L6 2" stroke="#fff4d8" stroke-width="0.900"></path></svg>
<svg style="left:1013px;top:3.500px" width="11" height="8" viewBox="0 0 11 8"><rect x="2.500" y="0.500" width="8" height="7" fill="none" stroke="#e8e8e8" stroke-width="0.900"></rect><rect x="0" y="3.500" width="4" height="4.500" fill="#e8e8e8"></rect></svg>
<svg style="left:1030px;top:3.500px" width="12" height="8" viewBox="0 0 12 8"><path d="M0.500 3.500H2.500L5 1V8L2.500 6.500H0.500Z" fill="#e8e8e8"></path><path d="M6.500 2.500Q8 4.500 6.500 7M8.300 1.200Q10.800 4.500 8.300 8" fill="none" stroke="#e8e8e8" stroke-width="0.800"></path></svg>
<div class="t" style="left: 1049.5px; top: 3.8px; font-size: 8.8px; color: rgb(255, 255, 255); transform: scaleX(0.865);">ENG</div>
<div class="t" style="left: 1074.5px; top: 3.8px; font-size: 8.8px; color: rgb(255, 255, 255); transform: scaleX(0.959);">11:42</div>
</div>


</body></html>
